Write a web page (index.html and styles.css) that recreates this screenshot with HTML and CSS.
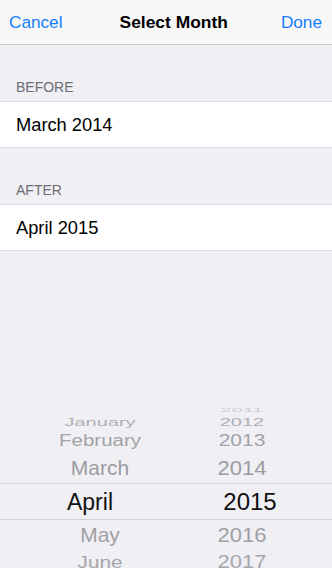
FILE: index.html
```html
<!DOCTYPE html>
<html>
<head>
<meta charset="utf-8">
<link rel="stylesheet" href="styles.css">
</head>
<body>
<div class="screen">
  <header class="navbar">
    <span class="nav-btn">Cancel</span>
    <span class="nav-title">Select Month</span>
    <span class="nav-btn">Done</span>
  </header>
  <div class="section-header">BEFORE</div>
  <div class="cell">March 2014</div>
  <div class="section-header">AFTER</div>
  <div class="cell">April 2015</div>
  <div class="picker">
    <div class="prow r-far">
      <span class="m"></span><span class="y"><i>2011</i></span>
    </div>
    <div class="prow r-3">
      <span class="m"><i>January</i></span><span class="y"><i>2012</i></span>
    </div>
    <div class="prow r-2">
      <span class="m"><i>February</i></span><span class="y"><i>2013</i></span>
    </div>
    <div class="prow r-1">
      <span class="m"><i>March</i></span><span class="y"><i>2014</i></span>
    </div>
    <div class="prow r-sel">
      <span class="m"><i>April</i></span><span class="y"><i>2015</i></span>
    </div>
    <div class="prow r-1 below">
      <span class="m"><i>May</i></span><span class="y"><i>2016</i></span>
    </div>
    <div class="prow r-2 below">
      <span class="m"><i>June</i></span><span class="y"><i>2017</i></span>
    </div>
  </div>
</div>
</body>
</html>
```
FILE: styles.css
```css
* { box-sizing: border-box; margin: 0; padding: 0; }
html, body { width: 332px; height: 568px; overflow: hidden; }
body {
  background: #efeff4;
  font-family: "Liberation Sans", Arial, sans-serif;
  color: #000;
}
.screen { display: flex; flex-direction: column; height: 568px; overflow: hidden; }
.navbar {
  height: 45px;
  flex: none;
  background: #f7f7f7;
  border-bottom: 1px solid #c8c7cc;
  display: flex;
  align-items: center;
  justify-content: space-between;
  padding: 1px 10px 0 9px;
}
.nav-btn { font-size: 17.2px; color: #157efb; }
.nav-title { font-size: 17.4px; font-weight: bold; color: #000; margin-left: 4px; }
.section-header {
  height: 56px;
  flex: none;
  display: flex;
  align-items: flex-end;
  padding: 0 16px 6px;
  font-size: 14px;
  color: #6d6d72;
  line-height: 16px;
}
.cell {
  height: 47px;
  flex: none;
  background: #fff;
  border-top: 1px solid #dcdce0;
  border-bottom: 1px solid #dcdce0;
  display: flex;
  align-items: center;
  padding: 1px 16px 0;
  font-size: 18.3px;
}
.picker {
  flex: 1;
  padding-top: 154px;
  display: flex;
  flex-direction: column;
}
.prow {
  display: grid;
  grid-template-columns: 200px 84px;
  flex: none;
  color: #a0a0a4;
}
.prow span { text-align: center; white-space: nowrap; overflow: visible; }
.prow i { font-style: normal; display: inline-block; transform-origin: center center; }
.r-far { height: 10px; line-height: 10px; font-size: 20px; color: #cfcfd3; }
.r-far i { transform: scaleY(0.25); }
.r-3 { height: 14px; line-height: 14px; font-size: 20px; color: #b0b0b4; }
.r-3 i { transform: scaleY(0.5); }
.r-3 .y i { font-size: 20px; }
.r-2 { height: 24px; line-height: 24px; font-size: 20.5px; color: #a3a3a7; }
.r-2 i { transform: scaleY(0.76); }
.r-2 .y i { font-size: 21px; }
.r-1 { height: 30px; line-height: 30px; font-size: 21px; color: #9c9ca0; }
.r-1 i { transform: scaleY(0.93); }
.r-1 .y i { font-size: 22px; }
.r-sel {
  height: 37px;
  line-height: 36px;
  font-size: 23px;
  color: #111;
  border-top: 1px solid #d4d4d8;
  border-bottom: 1px solid #d4d4d8;
}
.r-sel .m i { transform: translateX(-10px); }
.r-sel .y i { font-size: 24px; transform: translateX(8px); }
.below.r-1 { color: #a0a0a4; }
.below.r-2 { color: #a6a6aa; }
.below.r-2 i { transform: scaleY(0.8); }
.below.r-2 .m i { font-size: 20.7px; }
.below.r-2 .y i { font-size: 22px; }
```
